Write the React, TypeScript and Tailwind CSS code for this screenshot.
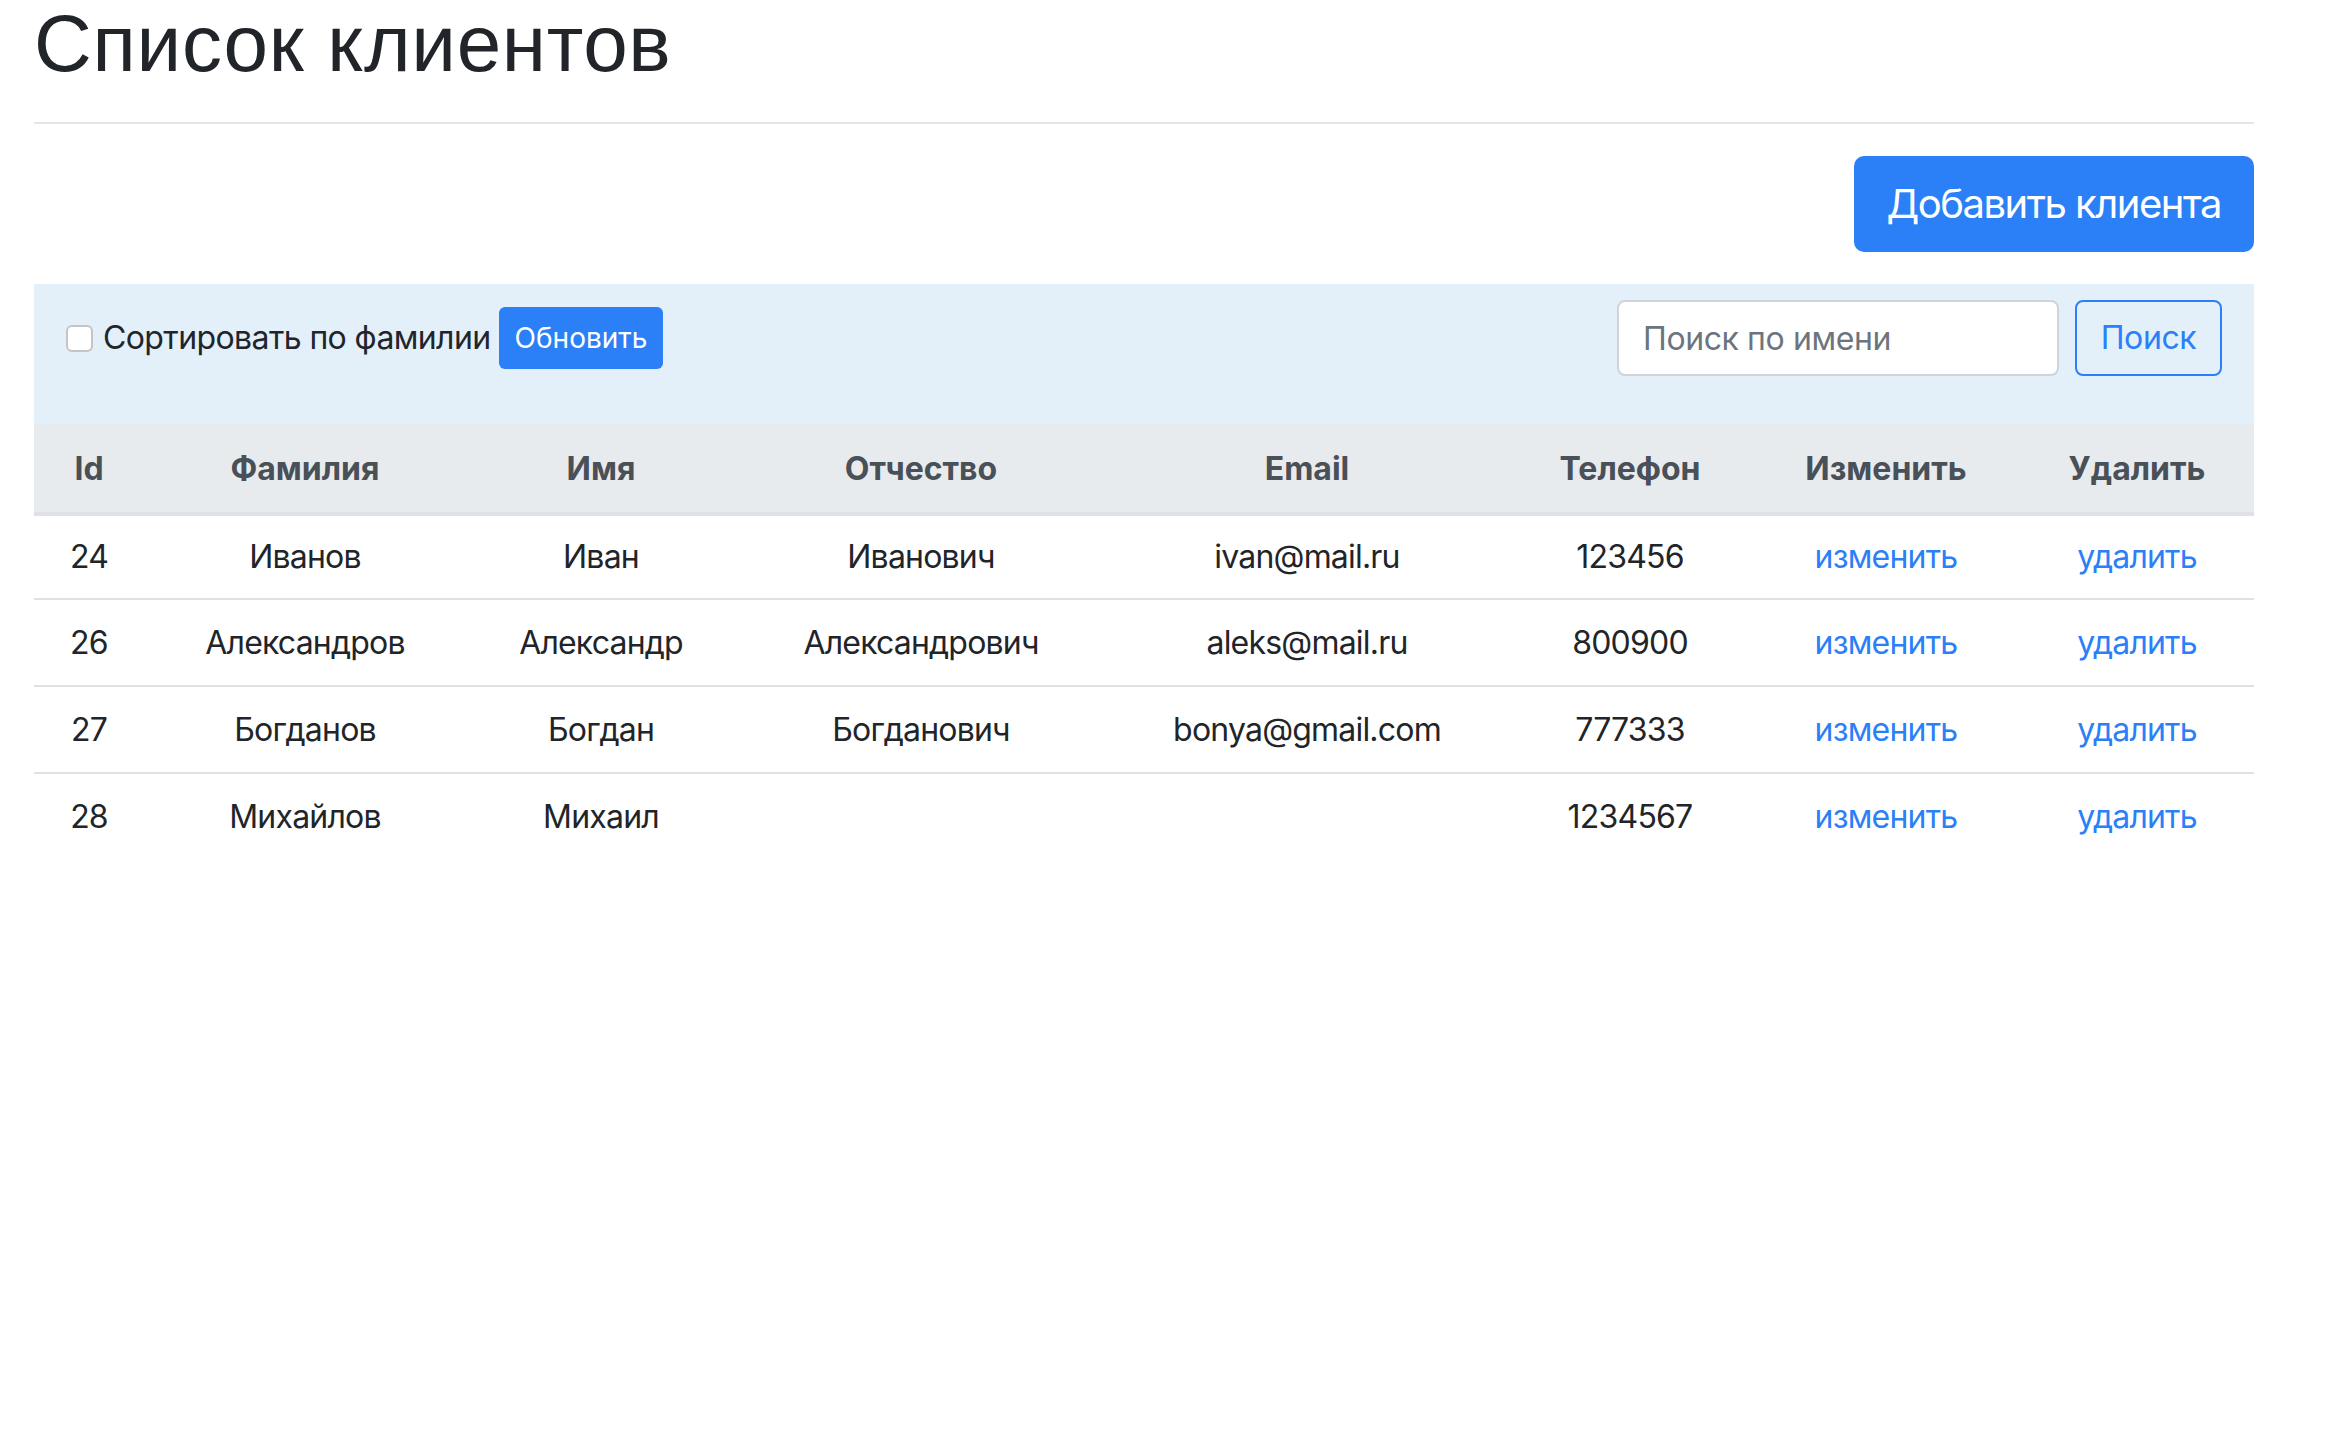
import React from "react";

type Client = {
  id: number;
  lastName: string;
  firstName: string;
  middleName: string;
  email: string;
  phone: string;
};

const clients: Client[] = [
  { id: 24, lastName: "Иванов", firstName: "Иван", middleName: "Иванович", email: "ivan@mail.ru", phone: "123456" },
  { id: 26, lastName: "Александров", firstName: "Александр", middleName: "Александрович", email: "aleks@mail.ru", phone: "800900" },
  { id: 27, lastName: "Богданов", firstName: "Богдан", middleName: "Богданович", email: "bonya@gmail.com", phone: "777333" },
  { id: 28, lastName: "Михайлов", firstName: "Михаил", middleName: "", email: "", phone: "1234567" },
];

const headers = ["Id", "Фамилия", "Имя", "Отчество", "Email", "Телефон", "Изменить", "Удалить"];

const ClientListPage: React.FC = () => (
  <div className="min-h-screen bg-white pl-[34px] pr-[80px] font-['Inter',sans-serif] text-[#212529] antialiased">
    <h1 className="font-['Liberation_Sans',Arial,sans-serif] text-[80px] leading-[88px] font-normal tracking-[0.7px] text-[#212529]">
      Список клиентов
    </h1>
    <div className="mt-[34px] h-[2px] bg-[#e5e5e5]"></div>

    <div className="mt-[32px] flex justify-end">
      <button type="button" className="h-[96px] rounded-[10px] bg-[#2b7ff7] px-[33px] text-[40px] tracking-[-1.5px] text-white">
        Добавить клиента
      </button>
    </div>

    <div className="mt-[32px] flex items-start justify-between bg-[#e3f0fa] pt-[16px] pb-[48px] pl-[32px] pr-[32px]">
      <div className="flex h-[76px] items-center">
        <input
          type="checkbox"
          className="h-[27px] w-[27px] appearance-none rounded-[6px] border-2 border-[#c4c4c4] bg-white"
        />
        <label className="ml-[10px] text-[32px] leading-[48px] tracking-[-0.6px]">Сортировать по фамилии</label>
        <button type="button" className="ml-[8px] h-[62px] rounded-[6px] bg-[#2b7ff7] px-[16px] text-[28px] text-white">
          Обновить
        </button>
      </div>
      <div className="flex items-center gap-[16px]">
        <input
          type="text"
          placeholder="Поиск по имени"
          className="h-[76px] w-[442px] rounded-[8px] border-2 border-[#ced4da] bg-white px-[24px] text-[32px] tracking-[-0.4px] placeholder:text-[#6c757d] outline-none"
        />
        <button
          type="button"
          className="h-[76px] w-[147px] rounded-[8px] border-2 border-[#2b7ff7] text-[32px] tracking-[-0.4px] text-[#2b7ff7]"
        >
          Поиск
        </button>
      </div>
    </div>

    <table className="w-[2220px] table-fixed border-collapse text-center text-[32px]">
      <colgroup>
        <col className="w-[110px]" />
        <col className="w-[322px]" />
        <col className="w-[270px]" />
        <col className="w-[370px]" />
        <col className="w-[402px]" />
        <col className="w-[244px]" />
        <col className="w-[268px]" />
        <col className="w-[234px]" />
      </colgroup>
      <thead>
        <tr className="h-[90px] border-b-4 border-[#dee2e6] bg-[#e8ebee]">
          {headers.map((h) => (
            <th key={h} className="pt-[2px] font-bold text-[#495057]">
              {h}
            </th>
          ))}
        </tr>
      </thead>
      <tbody className="tracking-[-0.8px]">
        {clients.map((c, i) => (
          <tr key={c.id} className={i > 0 ? "h-[87px] border-t-2 border-[#dee2e6]" : "h-[85px]"}>
            <td>{c.id}</td>
            <td>{c.lastName}</td>
            <td>{c.firstName}</td>
            <td>{c.middleName}</td>
            <td>{c.email}</td>
            <td>{c.phone}</td>
            <td>
              <a href="#" className="text-[#2b7ff7]">изменить</a>
            </td>
            <td>
              <a href="#" className="text-[#2b7ff7]">удалить</a>
            </td>
          </tr>
        ))}
      </tbody>
    </table>
  </div>
);

export default ClientListPage;
